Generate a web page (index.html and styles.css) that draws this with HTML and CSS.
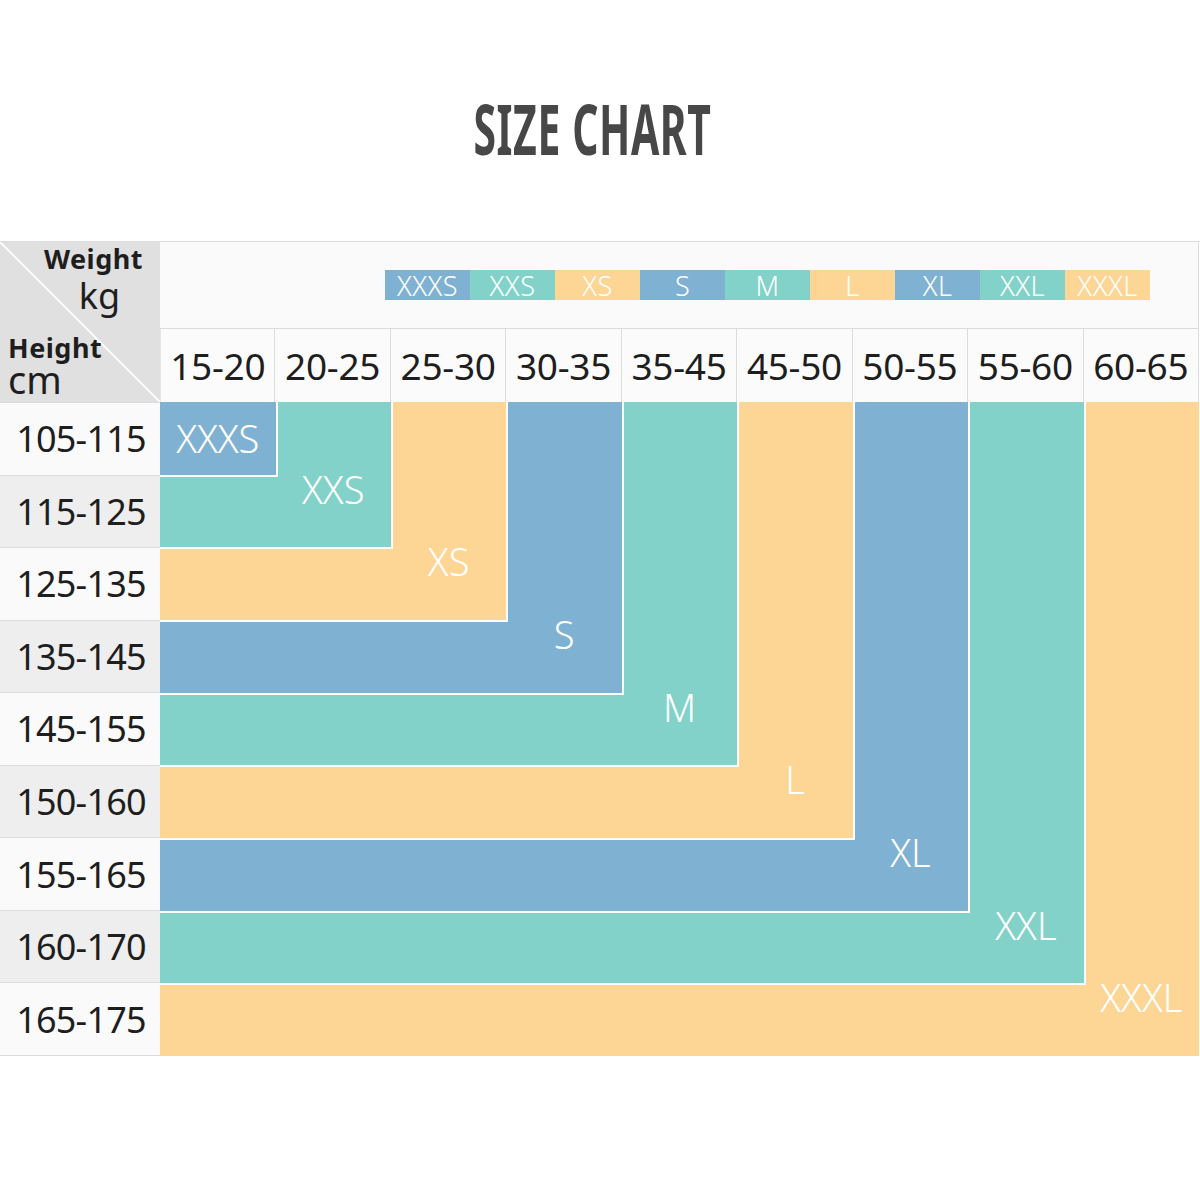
FILE: index.html
```html
<!DOCTYPE html>
<html lang="en">
<head>
<meta charset="utf-8">
<title>Size Chart</title>
<link rel="stylesheet" href="styles.css">
</head>
<body>
<header class="title-wrap"><h1 class="title">SIZE CHART</h1></header>
<section class="chart">
  <div class="corner">
    <div class="corner-top"><span class="c-bold">Weight</span><span class="c-unit">kg</span></div>
    <div class="corner-bottom"><span class="c-bold">Height</span><span class="c-unit cm">cm</span></div>
  </div>
  <div class="legend-row">
    <div class="legend">
      <span class="lg blue">XXXS</span><span class="lg teal">XXS</span><span class="lg yel">XS</span>
      <span class="lg blue">S</span><span class="lg teal">M</span><span class="lg yel">L</span>
      <span class="lg blue">XL</span><span class="lg teal">XXL</span><span class="lg yel">XXXL</span>
    </div>
  </div>
  <div class="weights">
    <div class="w">15-20</div><div class="w">20-25</div><div class="w">25-30</div>
    <div class="w">30-35</div><div class="w">35-45</div><div class="w">45-50</div>
    <div class="w">50-55</div><div class="w">55-60</div><div class="w">60-65</div>
  </div>
  <div class="heights">
    <div class="h">105-115</div><div class="h">115-125</div><div class="h">125-135</div>
    <div class="h">135-145</div><div class="h">145-155</div><div class="h">150-160</div>
    <div class="h">155-165</div><div class="h">160-170</div><div class="h">165-175</div>
  </div>
  <div class="box yel outer">
    <div class="box teal">
      <div class="box blue">
        <div class="box yel">
          <div class="box teal">
            <div class="box blue">
              <div class="box yel">
                <div class="box teal">
                  <div class="box blue inner"><span class="lbl">XXXS</span></div>
                  <span class="lbl">XXS</span>
                </div>
                <span class="lbl">XS</span>
              </div>
              <span class="lbl">S</span>
            </div>
            <span class="lbl">M</span>
          </div>
          <span class="lbl">L</span>
        </div>
        <span class="lbl">XL</span>
      </div>
      <span class="lbl">XXL</span>
    </div>
    <span class="lbl">XXXL</span>
  </div>
</section>
</body>
</html>
```
FILE: styles.css
```css
* { box-sizing: border-box; }
html, body { margin: 0; padding: 0; background: #fff; }
body { font-family: "Noto Sans", "Open Sans", sans-serif; color: #1e1e1e; width: 1200px; }

.title-wrap { height: 242px; padding-top: 93px; display: flex; justify-content: center; }
.title {
  margin: 0 16px 0 0; font-size: 70px; line-height: 70px; font-weight: 700;
  color: #474747; transform: scaleX(0.585); letter-spacing: 1px; white-space: nowrap;
}

.chart {
  display: grid;
  grid-template-columns: 160px 1039px;
  grid-template-rows: 86px 74px 654px;
  border-top: 1px solid #dcdcdc;
  margin-top: -1px;
}

.corner {
  grid-column: 1; grid-row: 1 / 3;
  background: linear-gradient(to top right, #e0e0e0 calc(50% - 1.2px), #fafafa calc(50% - 1.2px), #fafafa calc(50% + 1.2px), #e0e0e0 calc(50% + 1.2px));
  display: flex; flex-direction: column; justify-content: space-between;
}
.corner-top { display: flex; flex-direction: column; align-items: center; align-self: flex-end; padding: 4px 17px 0 0; }
.corner-bottom { display: flex; flex-direction: column; align-items: flex-start; padding: 0 0 8px 8px; }
.c-bold { font-size: 27px; line-height: 26px; font-weight: 700; letter-spacing: 0.5px; }
.c-unit { font-size: 36px; line-height: 36px; margin-top: 6px; padding-left: 12px; }
.c-unit.cm { font-size: 38px; line-height: 30px; margin-top: 3px; padding-left: 0; }

.legend-row {
  grid-column: 2; grid-row: 1;
  background: #fafafa; border-right: 1px solid #dcdcdc;
  display: flex; align-items: center; padding-left: 225px;
}
.legend { display: flex; height: 30px; }
.lg {
  width: 85px; height: 30px; display: flex; align-items: center; justify-content: center;
  color: #fff; font-size: 27px; font-weight: 300; letter-spacing: 0.5px;
}

.weights {
  grid-column: 2; grid-row: 2;
  display: grid; grid-template-columns: repeat(9, 1fr);
  border-top: 1px solid #dcdcdc; background: #fbfbfb;
}
.w {
  display: flex; align-items: center; justify-content: center;
  font-size: 37px; border-right: 1px solid #dcdcdc; letter-spacing: -0.3px;
}
.w:first-child { border-left: 1px solid #e6e6e6; }

.heights {
  grid-column: 1; grid-row: 3;
  display: grid; grid-template-rows: repeat(9, 1fr);
  border-top: 1px solid #dcdcdc;
}
.h {
  display: flex; align-items: center; justify-content: center;
  font-size: 36px; letter-spacing: -0.8px; background: #fafafa;
  border-bottom: 1px solid #dcdcdc; padding-left: 2px;
}
.h:nth-child(even) { background: #eeeeee; }

.blue { background: #7fb2d2; }
.teal { background: #83d2c9; }
.yel { background: #fdd595; }

.box {
  display: grid;
  grid-template-columns: 1fr 115.44px;
  grid-template-rows: 1fr 72.67px;
}
.outer { grid-column: 2; grid-row: 3; }
.box > .box { grid-column: 1; grid-row: 1; box-shadow: 1px 1px 0 1px #fff; }
.lbl {
  grid-column: 2; grid-row: 2; justify-self: center; align-self: start;
  color: #fff; font-size: 38px; line-height: 36px; font-weight: 300; margin-top: -4px;
}
.box.inner { display: flex; align-items: center; justify-content: center; }
.box.inner .lbl { margin: 0; align-self: center; }
```
